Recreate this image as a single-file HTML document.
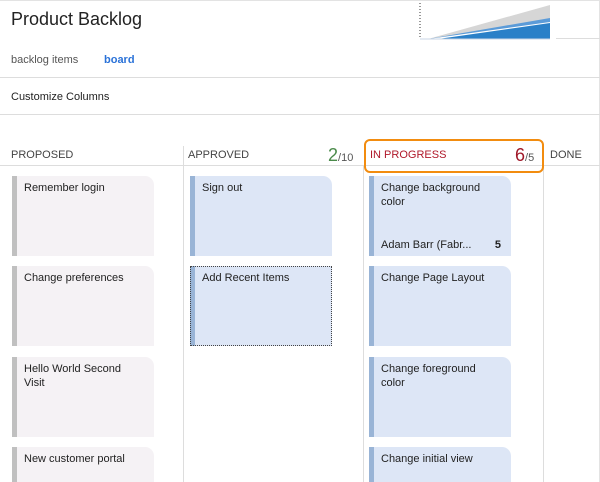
<!DOCTYPE html>
<html style="overflow:hidden;height:482px"><head><meta charset="utf-8"><style>
body{margin:0;width:600px;height:482px;overflow:hidden;background:#fff;font-family:"Liberation Sans",sans-serif;color:#222;position:relative}
.a{position:absolute}
.card{position:absolute;width:137px;height:80px;border-left:5px solid #c0c0c0;background:#f5f2f5;border-top-right-radius:9px;box-sizing:content-box;font-size:11px;color:#222}
.card span{position:absolute;left:7px;top:5px;width:112px;line-height:14px}
.b{background:#dde6f6;border-left-color:#99b4d6}
.hl{position:absolute;font-size:11px;color:#444;top:149px}
</style></head><body>
<div class="a" style="left:0;top:0;width:599px;height:481px;border-right:1px solid #e3e3e3;border-top:1px solid #e3e3e3"></div>
<div class="a" style="left:11px;top:9px;font-size:18px;color:#222">Product Backlog</div>
<svg class="a" style="left:418px;top:3px" width="182" height="38">
<line x1="2" y1="0" x2="2" y2="36" stroke="#333" stroke-dasharray="1,2"/>
<polygon points="10,36 132,2 132,36" fill="#d6d6d6"/>
<polygon points="10,36 132,17 132,36" fill="#fff"/>
<polygon points="10,36 132,15 132,19" fill="#5b9bd8"/>
<polygon points="20,36 132,20 132,36" fill="#2a80c8"/>
<line x1="2" y1="36" x2="132" y2="36" stroke="#c8d4e6"/>
<line x1="138" y1="35.5" x2="182" y2="35.5" stroke="#ddd"/>
</svg>
<div class="a" style="left:11px;top:54px;font-size:11px;color:#555">backlog items</div>
<div class="a" style="left:104px;top:54px;font-size:11px;color:#2a72d8;font-weight:bold">board</div>
<div class="a" style="left:0;top:77px;width:600px;height:1px;background:#ddd"></div>
<div class="a" style="left:11px;top:91px;font-size:11px;color:#222">Customize Columns</div>
<div class="a" style="left:0;top:114px;width:600px;height:1px;background:#ddd"></div>
<div class="a" style="left:0;top:165px;width:600px;height:1px;background:#ddd"></div>
<div class="a" style="left:183px;top:146px;width:1px;height:336px;background:#ddd"></div>
<div class="a" style="left:363px;top:166px;width:1px;height:316px;background:#ddd"></div>
<div class="a" style="left:543px;top:166px;width:1px;height:316px;background:#ddd"></div>
<div class="hl" style="left:11px">PROPOSED</div>
<div class="hl" style="left:188px">APPROVED</div>
<div class="a" style="left:328px;top:145px;font-size:18px;color:#4a8a4a">2<span style="font-size:11px;color:#555">/10</span></div>
<div class="a" style="left:364px;top:139px;width:176px;height:30px;border:2px solid #f28c0f;border-radius:6px"></div>
<div class="hl" style="left:370px;color:#b0182a">IN PROGRESS</div>
<div class="a" style="left:515px;top:145px;font-size:18px;color:#a01828">6<span style="font-size:11px;color:#555">/5</span></div>
<div class="hl" style="left:550px">DONE</div>
<div class="card" style="left:12px;top:176px"><span>Remember login</span></div>
<div class="card" style="left:12px;top:266px"><span>Change preferences</span></div>
<div class="card" style="left:12px;top:357px"><span>Hello World Second Visit</span></div>
<div class="card" style="left:12px;top:447px;height:35px"><span>New customer portal</span></div>
<div class="card b" style="left:190px;top:176px"><span>Sign out</span></div>
<div class="card b" style="left:190px;top:266px;border-top-right-radius:0;outline:1px dotted #444;outline-offset:-1px"><span>Add Recent Items</span></div>
<div class="card b" style="left:369px;top:176px"><span>Change background color</span><span style="top:62px">Adam Barr (Fabr...</span><span style="top:62px;left:auto;width:auto;right:10px;font-weight:bold">5</span></div>
<div class="card b" style="left:369px;top:266px"><span>Change Page Layout</span></div>
<div class="card b" style="left:369px;top:357px"><span>Change foreground color</span></div>
<div class="card b" style="left:369px;top:447px;height:35px"><span>Change initial view</span></div>
</body></html>
